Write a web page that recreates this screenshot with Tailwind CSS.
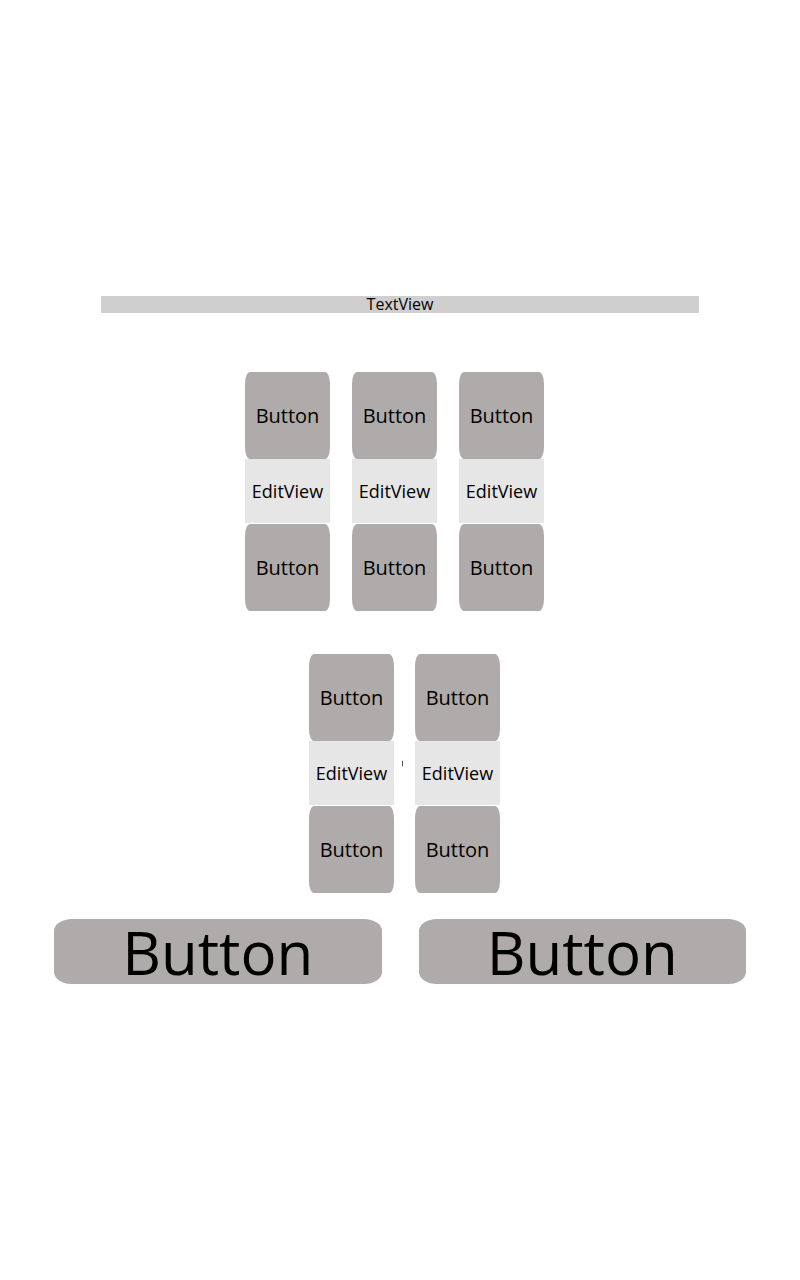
<!DOCTYPE html>
<html lang="en">
<head>
<meta charset="utf-8">
<meta name="viewport" content="width=device-width, initial-scale=1">
<title>TextView</title>
<script src="https://cdn.jsdelivr.net/npm/@tailwindcss/browser@4"></script>
</head>
<body class="min-h-screen bg-white pt-[296px] font-['Open_Sans','Noto_Sans',sans-serif] text-black">
<main class="flex flex-col">
  <h1 class="mx-[101px] h-[17px] bg-[#d0cecf] text-center text-base leading-4">TextView</h1>

  <section class="mt-[59px] flex justify-center gap-[22px] pr-[11px]">
    <div class="flex w-[85px] flex-col">
      <button type="button" class="h-[87px] rounded-[5px/12px] bg-[#afabaa] text-xl">Button</button>
      <input type="text" value="EditView" aria-label="Edit 1" class="mb-px h-16 w-full bg-[#e6e6e6] text-center text-lg">
      <button type="button" class="h-[87px] rounded-[5px/12px] bg-[#afabaa] text-xl">Button</button>
    </div>
    <div class="flex w-[85px] flex-col">
      <button type="button" class="h-[87px] rounded-[5px/12px] bg-[#afabaa] text-xl">Button</button>
      <input type="text" value="EditView" aria-label="Edit 2" class="mb-px h-16 w-full bg-[#e6e6e6] text-center text-lg">
      <button type="button" class="h-[87px] rounded-[5px/12px] bg-[#afabaa] text-xl">Button</button>
    </div>
    <div class="flex w-[85px] flex-col">
      <button type="button" class="h-[87px] rounded-[5px/12px] bg-[#afabaa] text-xl">Button</button>
      <input type="text" value="EditView" aria-label="Edit 3" class="mb-px h-16 w-full bg-[#e6e6e6] text-center text-lg">
      <button type="button" class="h-[87px] rounded-[5px/12px] bg-[#afabaa] text-xl">Button</button>
    </div>
  </section>

  <section class="mt-[43px] flex justify-center pl-[9px]">
    <div class="flex w-[85px] flex-col">
      <button type="button" class="h-[87px] rounded-[5px/12px] bg-[#afabaa] text-xl">Button</button>
      <input type="text" value="EditView" aria-label="Edit 4" class="mb-px h-16 w-full bg-[#e6e6e6] text-center text-lg">
      <button type="button" class="h-[87px] rounded-[5px/12px] bg-[#afabaa] text-xl">Button</button>
    </div>
    <div class="flex w-[21px] pt-[106px] pl-2">
      <svg class="h-[7px] w-px" viewBox="0 0 1 7" aria-hidden="true"><path d="M0 1h1v5H0z" fill="#555"/><path d="M0 0h1v1H0zM0 6h1v1H0z" fill="#ccc"/></svg>
    </div>
    <div class="flex w-[85px] flex-col">
      <button type="button" class="h-[87px] rounded-[5px/12px] bg-[#afabaa] text-xl">Button</button>
      <input type="text" value="EditView" aria-label="Edit 5" class="mb-px h-16 w-full bg-[#e6e6e6] text-center text-lg">
      <button type="button" class="h-[87px] rounded-[5px/12px] bg-[#afabaa] text-xl">Button</button>
    </div>
  </section>

  <section class="mx-[54px] mt-[26px] flex gap-[37px]">
    <button type="button" class="h-[65px] flex-1 rounded-[18px/12px] bg-[#afabaa] text-6xl leading-[64px]">Button</button>
    <button type="button" class="h-[65px] flex-1 rounded-[18px/12px] bg-[#afabaa] text-6xl leading-[64px]">Button</button>
  </section>
</main>
</body>
</html>
